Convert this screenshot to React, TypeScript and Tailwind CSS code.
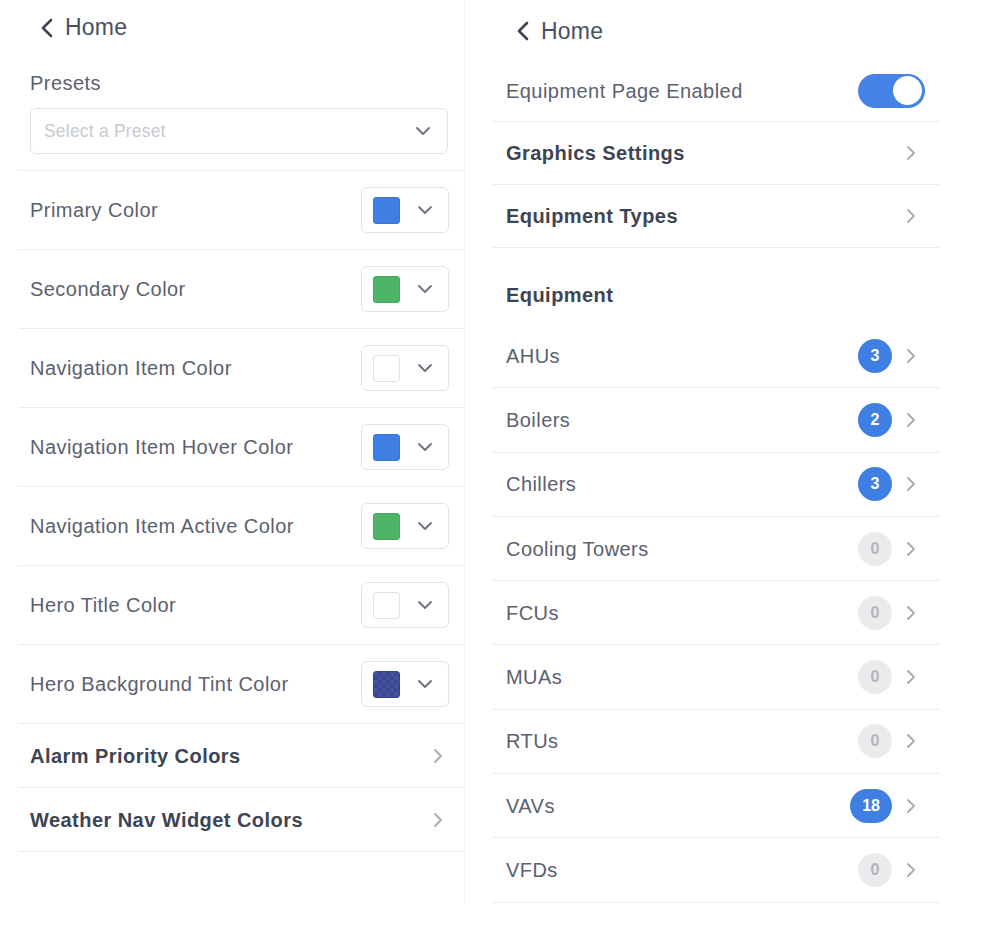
import React from 'react';

const font = { fontFamily: '"Liberation Sans", Arial, sans-serif' };

function ChevronLeft() {
  return (
    <svg width="14" height="20" viewBox="0 0 14 20" fill="none" stroke="#3d4454" strokeWidth="2.6" strokeLinecap="round" strokeLinejoin="round">
      <path d="M11 2 L3 10 L11 18" />
    </svg>
  );
}

function ChevronRight() {
  return (
    <svg width="10" height="16" viewBox="0 0 10 16" fill="none" stroke="#a9abb2" strokeWidth="1.8" strokeLinecap="round" strokeLinejoin="round">
      <path d="M2 2 L8 8 L2 14" />
    </svg>
  );
}

function ChevronDown() {
  return (
    <svg width="16" height="10" viewBox="0 0 16 10" fill="none" stroke="#6b7080" strokeWidth="1.8" strokeLinecap="round" strokeLinejoin="round">
      <path d="M2 2 L8 8 L14 2" />
    </svg>
  );
}

interface ColorRow {
  label: string;
  swatch: string;
}

// the tint swatch is semi transparent, hence the checker
const colorRows: ColorRow[] = [
  { label: 'Primary Color', swatch: 'bg-[#3f7fe4] border-[#3a76d8]' },
  { label: 'Secondary Color', swatch: 'bg-[#4db465] border-[#45a85c]' },
  { label: 'Navigation Item Color', swatch: 'bg-white border-[#e2e2e6]' },
  { label: 'Navigation Item Hover Color', swatch: 'bg-[#3f7fe4] border-[#3a76d8]' },
  { label: 'Navigation Item Active Color', swatch: 'bg-[#4db465] border-[#45a85c]' },
  { label: 'Hero Title Color', swatch: 'bg-white border-[#e2e2e6]' },
  {
    label: 'Hero Background Tint Color',
    swatch: 'bg-[repeating-conic-gradient(#3b4792_0_25%,#4552a0_0_50%)] bg-[length:8px_8px] border-[#34408a]',
  },
];

const equipment = [
  { name: 'AHUs', count: 3 },
  { name: 'Boilers', count: 2 },
  { name: 'Chillers', count: 3 },
  { name: 'Cooling Towers', count: 0 },
  { name: 'FCUs', count: 0 },
  { name: 'MUAs', count: 0 },
  { name: 'RTUs', count: 0 },
  { name: 'VAVs', count: 18 },
  { name: 'VFDs', count: 0 },
];

function HomeHeader({ className }: { className: string }) {
  return (
    <div className={`flex items-center gap-[11px] ${className}`}>
      <ChevronLeft />
      <span className="text-[23px] text-[#4a5060] leading-none tracking-[0.2px]">Home</span>
    </div>
  );
}

function ThemePanel() {
  return (
    <div className="w-[447px] h-[905px] border-r border-[#f5f5f7]">
      <HomeHeader className="h-[55px] pl-[22px]" />

      <div className="pt-[16px] pb-[16px] border-b border-[#ececef]">
        <div className="px-[12px] text-[20px] leading-[24px] tracking-[0.45px] text-[#5b6170]">Presets</div>
        <div className="mx-[12px] mt-[13px] w-[418px] h-[46px] rounded-md border border-[#e3e3e7] flex items-center justify-between pl-[13px] pr-[16px]">
          <span className="text-[17.5px] tracking-[0.2px] text-[#c8cad0]">Select a Preset</span>
          <ChevronDown />
        </div>
      </div>

      {colorRows.map((row) => (
        <div key={row.label} className="h-[79px] border-b border-[#ececef] flex items-center justify-between pl-[12px] pr-[15px]">
          <span className="text-[20px] tracking-[0.45px] text-[#5b6170]">{row.label}</span>
          <div className="w-[88px] h-[46px] rounded-md border border-[#e3e3e7] flex items-center justify-between pl-[11px] pr-[15px]">
            <div className={`w-[27px] h-[27px] rounded-[3px] border ${row.swatch}`} />
            <ChevronDown />
          </div>
        </div>
      ))}

      {['Alarm Priority Colors', 'Weather Nav Widget Colors'].map((label) => (
        <div key={label} className="h-[64px] border-b border-[#ececef] flex items-center justify-between pl-[12px] pr-[21px]">
          <span className="text-[20px] font-bold tracking-[0.45px] text-[#3d4454]">{label}</span>
          <ChevronRight />
        </div>
      ))}
    </div>
  );
}

function Badge({ count }: { count: number }) {
  const active = count > 0;
  return (
    <div
      className={`h-[34px] min-w-[34px] px-[12px] rounded-full flex items-center justify-center text-[16px] font-bold ${
        active ? 'bg-[#3f7fe4] text-white' : 'bg-[#ebebed] text-[#b4b6bc]'
      }`}
    >
      {count}
    </div>
  );
}

function EquipmentPanel() {
  return (
    <div className="w-[448px]">
      <HomeHeader className="h-[60px] pl-[24px] pt-[2px]" />

      <div className="h-[62px] border-b border-[#ececef] flex items-center justify-between pl-[14px] pr-[15px]">
        <span className="text-[20px] tracking-[0.45px] text-[#5b6170]">Equipment Page Enabled</span>
        <div className="w-[67px] h-[34px] rounded-full bg-[#4583e6] flex items-center justify-end pr-[3px]">
          <div className="w-[29px] h-[29px] rounded-full bg-white" />
        </div>
      </div>

      {['Graphics Settings', 'Equipment Types'].map((label) => (
        <div key={label} className="h-[63px] border-b border-[#ececef] flex items-center justify-between pl-[14px] pr-[24px]">
          <span className="text-[20px] font-bold tracking-[0.45px] text-[#3d4454]">{label}</span>
          <ChevronRight />
        </div>
      ))}

      <div className="h-[76px] pt-[35px] pl-[14px]">
        <div className="text-[20px] leading-[24px] font-bold tracking-[0.45px] text-[#3d4454]">Equipment</div>
      </div>

      {equipment.map((item) => (
        <div key={item.name} className="h-[64.3px] border-b border-[#ececef] flex items-center justify-between pl-[14px] pr-[24px]">
          <span className="text-[20px] tracking-[0.45px] text-[#5b6170]">{item.name}</span>
          <div className="flex items-center gap-[14px]">
            <Badge count={item.count} />
            <ChevronRight />
          </div>
        </div>
      ))}
    </div>
  );
}

export default function App() {
  return (
    <div className="w-[1000px] h-[935px] bg-white flex pl-[18px] gap-[27px]" style={font}>
      <ThemePanel />
      <EquipmentPanel />
    </div>
  );
}
